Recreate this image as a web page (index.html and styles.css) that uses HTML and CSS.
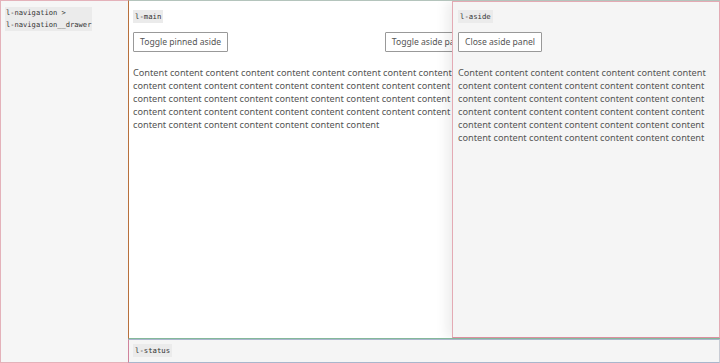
FILE: index.html
```html
<html lang="en">
  <head>
    <meta name="viewport" content="width=device-width,initial-scale=1">
    <title>Layout</title>
    <link rel="stylesheet" href="styles.css">
  </head>
<body>
  <div class="l-app">
    <nav class="l-navigation">
      <code class="tag">l-navigation &gt;<br>l-navigation__drawer</code>
    </nav>
    <div class="l-main-wrap">
      <main class="l-main">
        <div><code class="tag">l-main</code></div>
        <div class="toolbar">
          <button class="btn">Toggle pinned aside</button>
          <button class="btn">Toggle aside panel</button>
        </div>
        <p class="text">Content content content content content content content content content content content content content content content content content content content content content content content content content content content content content content content content content content content content content content content content content content content</p>
      </main>
      <aside class="l-aside">
        <div><code class="tag">l-aside</code></div>
        <div class="toolbar">
          <button class="btn">Close aside panel</button>
        </div>
        <p class="text">Content content content content content content content content content content content content content content content content content content content content content content content content content content content content content content content content content content content content content content content content content content</p>
      </aside>
    </div>
    <footer class="l-status">
      <code class="tag">l-status</code>
    </footer>
  </div>
</body>
</html>
```

FILE: styles.css
```css
html, body {
  padding: 0;
  margin: 0;
  font-family: "Noto Sans", sans-serif;
  font-size: 9.2px;
  color: #555;
}
.l-app {
  display: grid;
  grid-template-columns: 128px 1fr;
  grid-template-rows: 339px 24px;
  width: 720px;
  height: 363px;
}
.tag {
  display: inline-block;
  font-family: "DejaVu Sans Mono", monospace;
  font-size: 7.3px;
  line-height: 13px;
  background: #ebebeb;
  color: #333;
  padding: 0 2px;
}
.l-navigation {
  grid-row: 1 / 3;
  background: #f6f6f6;
  border: 1px solid #e4b2ba;
  border-right: none;
  padding: 6px 4px;
}
.l-navigation .tag {
  font-size: 7.1px;
  line-height: 12px;
  padding: 0 1px;
}
.l-main-wrap {
  position: relative;
  overflow: hidden;
  border-top: 1px solid #b4c4bc;
  border-left: 1px solid #b8703c;
  border-bottom: 1px solid #84b89a;
}
.l-main {
  background: #fff;
  height: 100%;
  width: 349px;
  padding: 9px 4px;
  box-sizing: border-box;
}
.toolbar {
  display: flex;
  justify-content: space-between;
  margin-top: 9px;
}
.btn {
  font-family: "Noto Sans", sans-serif;
  font-size: 8.6px;
  color: #555;
  background: #fff;
  border: 1px solid #999;
  border-radius: 1px;
  height: 20px;
  padding: 0 6px;
}
.text {
  margin: 14px 0 0;
  line-height: 13px;
}
.l-aside {
  position: absolute;
  top: 0;
  right: 0;
  bottom: 0;
  width: 268px;
  box-sizing: border-box;
  background: #f5f5f5;
  border: 1px solid #e4aab4;
  border-bottom-color: #dc8fa0;
  box-shadow: -5px 0 12px rgba(0, 0, 0, 0.08);
  padding: 8px 5px;
}
.l-status {
  background: #f5f5f5;
  border-left: 1px solid #d0839c;
  border-top: 1px solid #a9b6cc;
  border-bottom: 1px solid #a9b6cc;
  border-right: 1px solid #c9ccd4;
  padding: 4px 4px;
}
```
